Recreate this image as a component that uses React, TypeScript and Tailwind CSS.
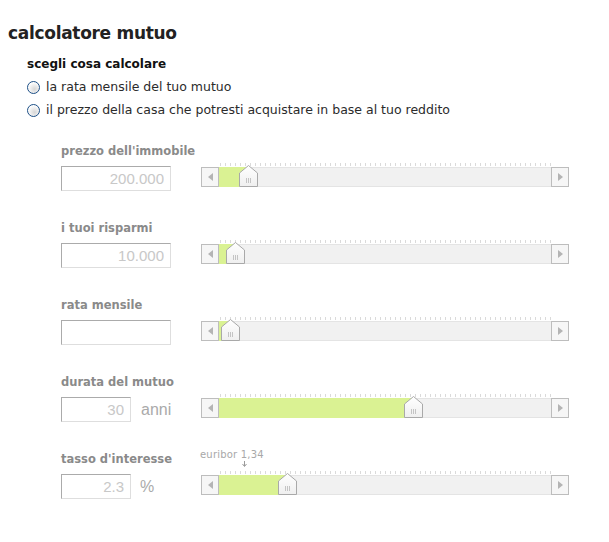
import { useState } from "react";

type Row = {
  label: string;
  value: string;
  unit?: string;
  pos: number;
  note?: boolean;
};

const rows: Row[] = [
  { label: "prezzo dell'immobile", value: "200.000", pos: 29 },
  { label: "i tuoi risparmi", value: "10.000", pos: 16 },
  { label: "rata mensile", value: "", pos: 11 },
  { label: "durata del mutuo", value: "30", unit: "anni", pos: 194 },
  { label: "tasso d'interesse", value: "2.3", unit: "%", pos: 68, note: true },
];

const Thumb = () => (
  <svg width="19" height="22" viewBox="0 0 19 22" className="block">
    <defs>
      <linearGradient id="thumbFill" x1="0" y1="0" x2="0" y2="1">
        <stop offset="0" stopColor="#ffffff" />
        <stop offset="1" stopColor="#efefef" />
      </linearGradient>
    </defs>
    <polygon
      points="0.5,8 9.5,0.5 18.5,8 18.5,21.5 0.5,21.5"
      fill="url(#thumbFill)"
      stroke="#a9a9a9"
      strokeWidth="1"
    />
    <line x1="7.5" y1="13" x2="7.5" y2="18" stroke="#c4c4c4" />
    <line x1="9.5" y1="13" x2="9.5" y2="18" stroke="#c4c4c4" />
    <line x1="11.5" y1="13" x2="11.5" y2="18" stroke="#c4c4c4" />
  </svg>
);

const Arrow = ({ dir }: { dir: "left" | "right" }) => (
  <div className="w-[18px] h-[20px] border border-[#bdbdbd] bg-[#f6f6f6] flex items-center justify-center shrink-0">
    <svg width="5" height="8" viewBox="0 0 5 8">
      {dir === "left" ? (
        <polygon points="5,0 5,8 0,4" fill="#b4b4b4" />
      ) : (
        <polygon points="0,0 0,8 5,4" fill="#b4b4b4" />
      )}
    </svg>
  </div>
);

const Slider = ({ pos }: { pos: number }) => (
  <div className="relative flex w-[368px] h-[20px] mt-[1px]">
    <Arrow dir="left" />
    <div className="relative flex-1 h-[20px] bg-[#f1f1f1] border-y border-[#e4e4e4]">
      <div className="absolute left-[1px] right-0 top-[-5px] h-[3px] bg-[repeating-linear-gradient(90deg,#dadada_0_1px,transparent_1px_5px)]"></div>
      <div className="absolute left-0 top-[-1px] bottom-[-1px] bg-[#daf293]" style={{ width: pos }}></div>
      <div className="absolute top-[-3px]" style={{ left: pos - 9.5 }}>
        <Thumb />
      </div>
    </div>
    <Arrow dir="right" />
  </div>
);

const Radio = ({ text }: { text: string }) => (
  <label className="flex items-center h-[23px] cursor-pointer">
    <span className="w-[13px] h-[13px] rounded-full border border-[#1d4f86] bg-[radial-gradient(circle_at_60%_65%,#d6d6d6,#ffffff_70%)] mr-[6px] shrink-0"></span>
    <span className="text-[12.5px] text-[#2b2b2b]">{text}</span>
  </label>
);

const App = () => {
  const [values] = useState(rows);

  return (
    <div className="w-[609px] h-[542px] bg-white font-['DejaVu_Sans',sans-serif] overflow-hidden">
      <h1 className="pt-[23px] pl-[8px] text-[17px] leading-[20px] font-bold tracking-[-0.3px] text-[#222]">
        calcolatore mutuo
      </h1>
      <div className="pl-[27px] mt-[13px]">
        <div className="text-[12px] leading-[16px] font-bold text-[#111]">scegli cosa calcolare</div>
        <div className="mt-[4px]">
          <Radio text="la rata mensile del tuo mutuo" />
          <Radio text="il prezzo della casa che potresti acquistare in base al tuo reddito" />
        </div>
      </div>
      <div className="pl-[61px] mt-[21px] flex flex-col gap-[29px]">
        {values.map((r) => (
          <div key={r.label} className="flex flex-col">
            <div className="flex h-[16px]">
              <div className="w-[140px] text-[11.5px] leading-[16px] font-bold text-[#8a8a8a]">{r.label}</div>
              {r.note && (
                <div className="relative -ml-[1px] mt-[-2px] flex flex-col items-start">
                  <span className="text-[10px] leading-[12px] tracking-[0.2px] text-[#a8a8a8]">euribor 1,34</span>
                  <svg width="5" height="6" viewBox="0 0 5 6" className="ml-[42px]">
                    <line x1="2.5" y1="0" x2="2.5" y2="5" stroke="#9a9a9a" />
                    <polyline points="0.5,3 2.5,5.5 4.5,3" fill="none" stroke="#9a9a9a" />
                  </svg>
                </div>
              )}
            </div>
            <div className="flex mt-[7px]">
              <div className="w-[140px] flex items-center h-[25px]">
                <input
                  readOnly
                  defaultValue={r.value}
                  className={`${r.unit ? "w-[70px]" : "w-[110px]"} h-[25px] border border-t-[#ababab] border-l-[#ababab] border-r-[#dedede] border-b-[#dedede] text-right pr-[6px] font-['Liberation_Sans',Arial,sans-serif] text-[15px] text-[#c8c8c8] outline-none`}
                />
                {r.unit && (
                  <span className={`${r.unit === "%" ? "ml-[9px]" : "ml-[10px]"} font-['Liberation_Sans',Arial,sans-serif] text-[16px] text-[#aaaaaa]`}>
                    {r.unit}
                  </span>
                )}
              </div>
              <Slider pos={r.pos} />
            </div>
          </div>
        ))}
      </div>
    </div>
  );
};

export default App;
